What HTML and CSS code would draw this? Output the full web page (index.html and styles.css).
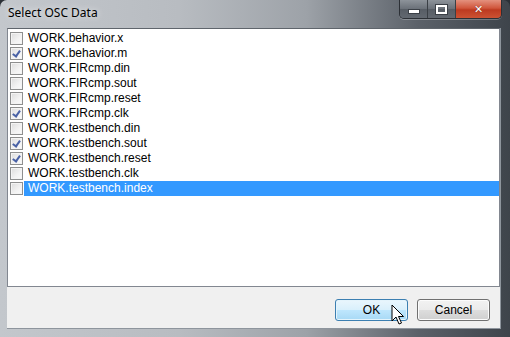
FILE: index.html
```html
<!DOCTYPE html>
<html>
<head>
<meta charset="utf-8">
<link rel="stylesheet" href="styles.css">
</head>
<body>
<div class="window">
  <div class="titlebar">
    <div class="title">Select OSC Data</div>
    <div class="caption">
      <div class="cbtn min"><span class="min-glyph"></span></div>
      <div class="cbtn max"><span class="max-glyph"></span></div>
      <div class="cbtn close"><span class="close-glyph">✕</span></div>
    </div>
  </div>
  <div class="client">
    <div class="list">
      <div class="row"><span class="cb"></span><span class="label">WORK.behavior.x</span></div>
      <div class="row"><span class="cb checked"></span><span class="label">WORK.behavior.m</span></div>
      <div class="row"><span class="cb"></span><span class="label">WORK.FIRcmp.din</span></div>
      <div class="row"><span class="cb"></span><span class="label">WORK.FIRcmp.sout</span></div>
      <div class="row"><span class="cb"></span><span class="label">WORK.FIRcmp.reset</span></div>
      <div class="row"><span class="cb checked"></span><span class="label">WORK.FIRcmp.clk</span></div>
      <div class="row"><span class="cb"></span><span class="label">WORK.testbench.din</span></div>
      <div class="row"><span class="cb checked"></span><span class="label">WORK.testbench.sout</span></div>
      <div class="row"><span class="cb checked"></span><span class="label">WORK.testbench.reset</span></div>
      <div class="row"><span class="cb"></span><span class="label">WORK.testbench.clk</span></div>
      <div class="row selected"><span class="cb"></span><span class="label">WORK.testbench.index</span></div>
    </div>
    <div class="footer">
      <button class="btn ok">OK</button>
      <button class="btn">Cancel</button>
      <svg class="cursor" width="14" height="22" viewBox="0 0 14 22">
        <path d="M1 1 L1 17 L5 13 L8 20 L10.5 19 L7.5 12.5 L12.5 12.5 Z" fill="#fff" stroke="#000" stroke-width="1" stroke-linejoin="miter"/>
      </svg>
    </div>
  </div>
</div>
</body>
</html>
```

FILE: styles.css
```css
html, body {
  margin: 0;
  padding: 0;
  background: #2b3036;
}
.window {
  width: 510px;
  height: 337px;
  box-sizing: border-box;
  display: flex;
  flex-direction: column;
  padding: 0 9px 8px 7px;
  border-radius: 7px 7px 0 0;
  background:
    linear-gradient(90deg, #c3c7cc 0%, #b8bcc1 35%, #9da2a8 60%, #5b6169 82%, #3e444b 100%);
  position: relative;
  font-family: "Liberation Sans", Arial, sans-serif;
}
.titlebar {
  height: 28px;
  display: flex;
  align-items: flex-start;
  flex-shrink: 0;
}
.title {
  font-family: "Noto Sans", "Open Sans", sans-serif;
  font-size: 12px;
  color: #000;
  margin-top: 4px;
  margin-left: 1px;
  text-shadow: 0 0 6px rgba(255,255,255,0.9);
}
.caption {
  margin-left: auto;
  margin-right: -1px;
  display: flex;
  height: 18px;
  border: 1px solid #2c3036;
  border-top: none;
  border-radius: 0 0 5px 5px;
  overflow: hidden;
  box-shadow: 0 1px 0 rgba(255,255,255,0.25);
}
.cbtn {
  height: 18px;
  display: flex;
  align-items: center;
  justify-content: center;
}
.min, .max {
  width: 27px;
  background: linear-gradient(180deg, #8d939a 0%, #6a7078 50%, #575d65 51%, #626870 100%);
  border-right: 1px solid #3a3f45;
}
.close {
  width: 45px;
  background: linear-gradient(180deg, #e4917e 0%, #d0563c 45%, #bd3a20 55%, #cc5233 100%);
}
.min-glyph {
  width: 10px;
  height: 3px;
  background: #fff;
  border: 1px solid #3b4047;
  margin-top: 5px;
}
.max-glyph {
  width: 7px;
  height: 5px;
  border: 2px solid #fff;
  outline: 1px solid #3b4047;
}
.close-glyph {
  color: #fff;
  font-family: "DejaVu Sans", sans-serif;
  font-weight: bold;
  font-size: 11px;
  line-height: 1;
  text-shadow: 0 0 1px #5a1a10;
}
.client {
  flex: 1;
  background: #f0f0f0;
  display: flex;
  flex-direction: column;
  border-bottom: 1px solid #8e959d;
  border-right: 1px solid #8e959d;
}
.list {
  height: 259px;
  box-sizing: border-box;
  background: #fff;
  border: 1px solid #828790;
  border-top-color: #5f656c;
  padding-top: 2px;
}
.row {
  height: 15px;
  display: flex;
  align-items: center;
  font-size: 12px;
  color: #000;
}
.cb {
  width: 11px;
  height: 11px;
  margin-left: 2px;
  margin-right: 1px;
  border: 1px solid #8e8f8f;
  background: linear-gradient(135deg, #dcdcdc 0%, #f3f3f3 60%, #fbfbfb 100%);
  box-shadow: inset 0 0 0 1px #f4f4f4;
  position: relative;
  flex-shrink: 0;
}
.cb.checked::after {
  content: "";
  position: absolute;
  left: 3px;
  top: 1px;
  width: 3px;
  height: 6px;
  border-right: 2px solid #4a62a6;
  border-bottom: 2px solid #4a62a6;
  transform: rotate(35deg);
}
.label {
  flex: 1;
  height: 15px;
  line-height: 15px;
  padding-left: 4px;
  white-space: nowrap;
}
.selected .label {
  background: #3399ff;
  color: #fff;
}
.footer {
  flex: 1;
  display: flex;
  justify-content: flex-end;
  align-items: flex-start;
  padding-top: 12px;
  padding-right: 10px;
  gap: 9px;
  position: relative;
}
.btn {
  width: 73px;
  height: 22px;
  box-sizing: border-box;
  border: 1px solid #707070;
  border-radius: 3px;
  background: linear-gradient(180deg, #f2f2f2 0%, #ebebeb 48%, #dddddd 52%, #cfcfcf 100%);
  box-shadow: inset 0 0 0 1px #fcfcfc;
  font-family: "Liberation Sans", Arial, sans-serif;
  font-size: 12px;
  color: #000;
  padding: 0;
}
.btn.ok {
  border-color: #3c7fb1;
  background: linear-gradient(180deg, #eaf6fd 0%, #d9f0fc 48%, #bee6fd 52%, #a7d9f5 100%);
  box-shadow: inset 0 0 0 1px #e4f4fc;
}
.cursor {
  position: absolute;
  left: 384px;
  top: 17px;
}
```
